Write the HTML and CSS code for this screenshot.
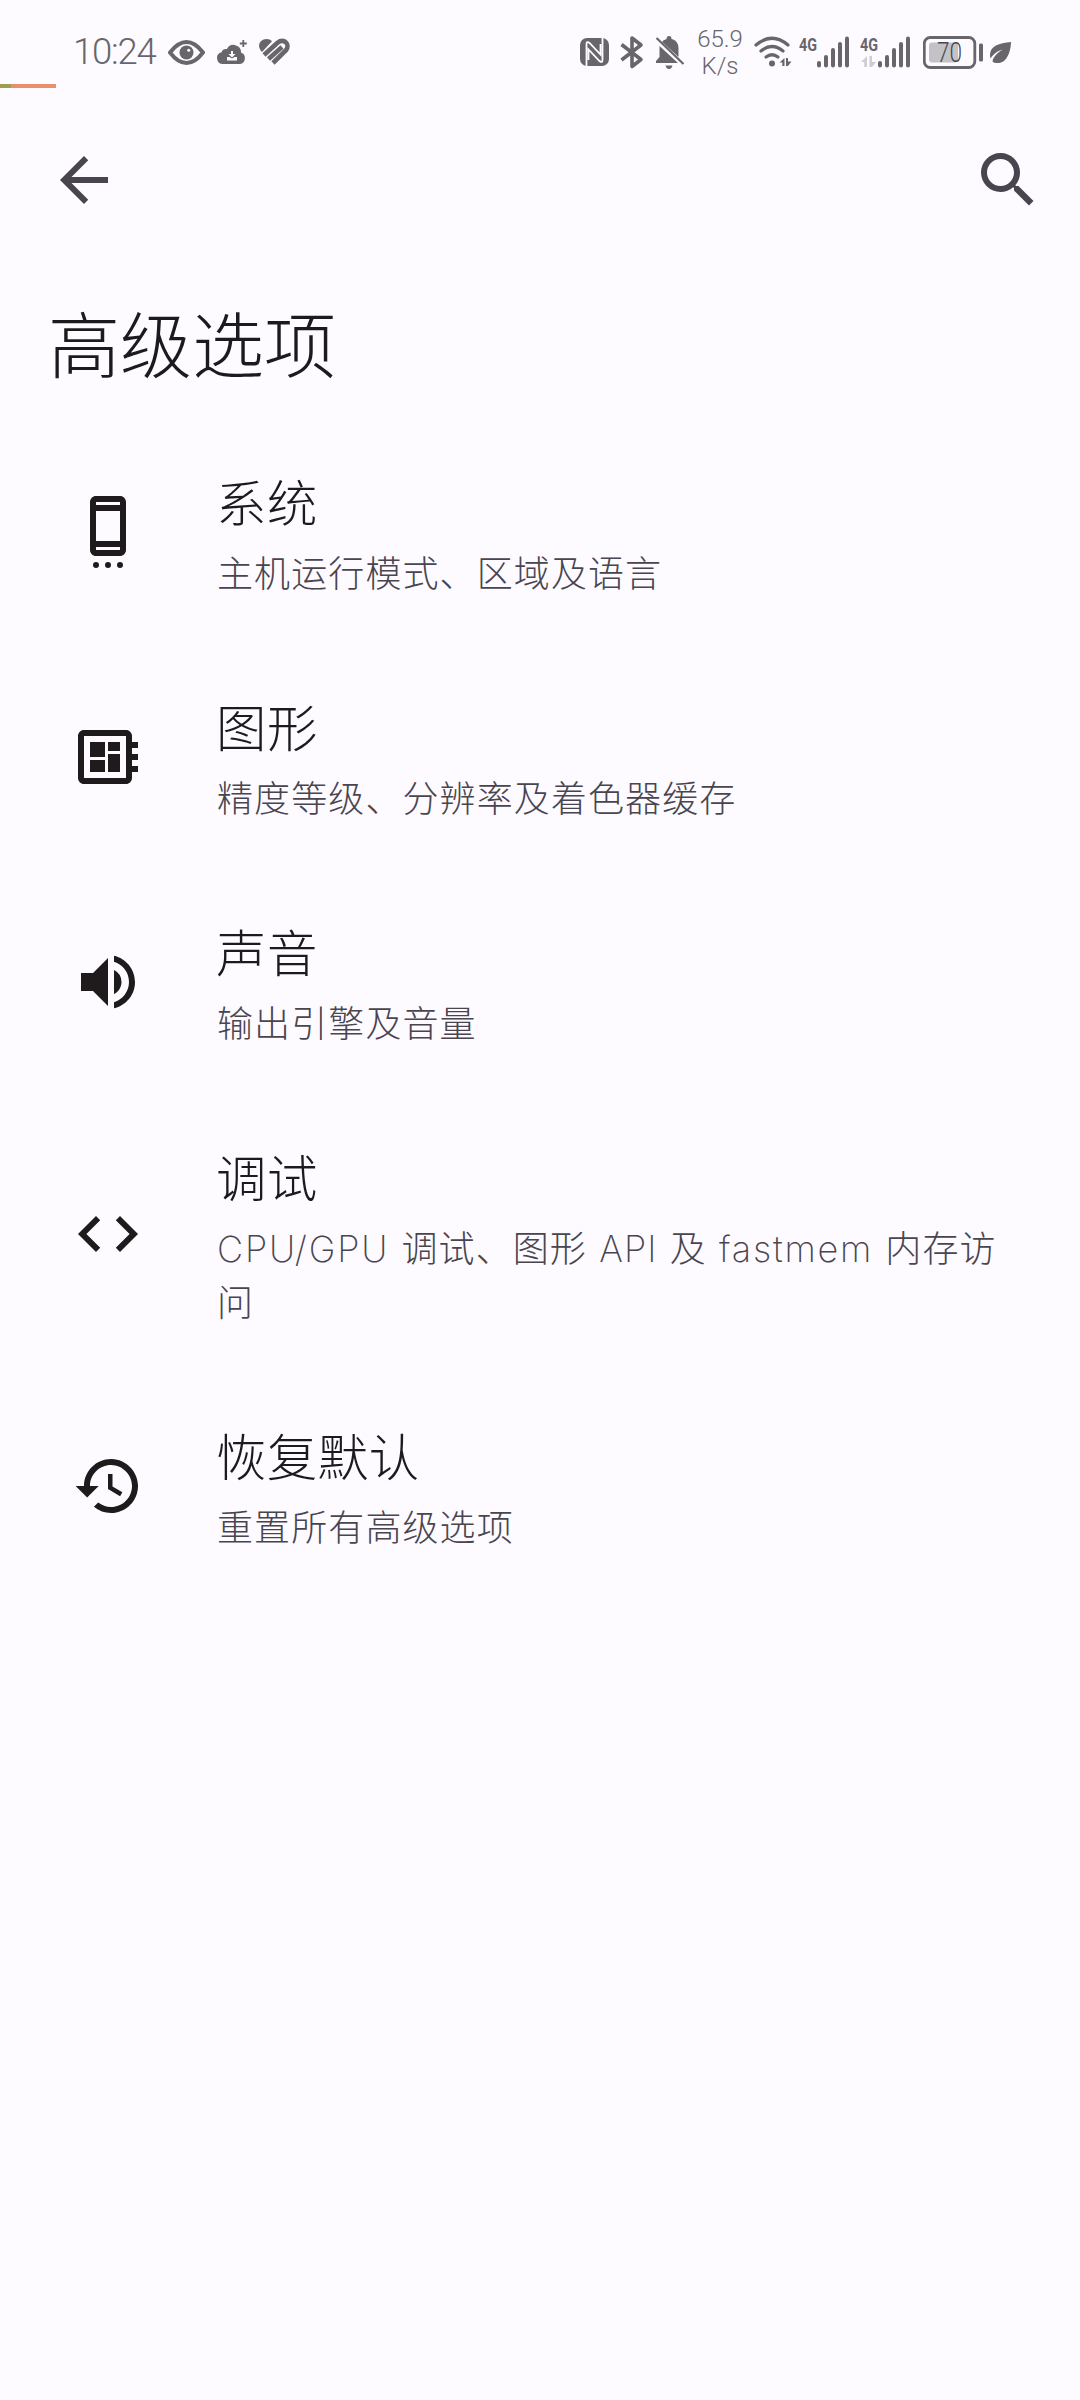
FILE: index.html
```html
<!DOCTYPE html>
<html lang="zh-CN">
<head>
<meta charset="utf-8">
<title>高级选项</title>
<link rel="stylesheet" href="styles.css">
</head>
<body>
<header class="status">
  <span class="clock">10:24</span>
  <svg class="eye" width="38" height="40" viewBox="168 32 38 40"><path d="M170 52.500Q178 42 186.500 42T203 52.500Q195 63 186.500 63T170 52.500Z" fill="none" stroke="#68666b" stroke-width="4" stroke-linejoin="round"/><circle cx="186.500" cy="52.500" r="7"/><circle cx="188.700" cy="50.200" r="1.500" fill="#fdfbff"/></svg>
  <svg class="cloud" width="31" height="40" viewBox="217 32 31 40"><path d="M223 64a6 6 0 0 1-1.500-11.800A5 5 0 0 1 227 49a7.400 7.400 0 0 1 14 3.500A6 6 0 0 1 240 64Z"/><path d="M243.300 40v7M239.800 43.500h7" stroke="#68666b" stroke-width="1.800"/><path d="M231 51h2v3h2.500l-3.500 3.500-3.500-3.500h2.500zM227 57h2.500l2.500 1.500 2.500-1.500h2.500v3.500h-10z" fill="#fdfbff"/></svg>
  <svg class="heart" width="32" height="40" viewBox="259 32 32 40"><path d="M262 52C256 46 260 39 266.500 39c2.500 0 4 .8 5.500 2.300z"/><path d="M264 55L277.500 42.800C284 37.500 290.500 44.500 286 50.200L273 63" fill="none" stroke="#68666b" stroke-width="4.600"/><path d="M268.500 59L282 47" stroke="#68666b" stroke-width="4.600"/></svg>
  <span class="grow"></span>
  <svg class="nfc" width="29" height="40" viewBox="580 32 29 40"><rect x="580" y="38" width="29" height="28" rx="7"/><path d="M586.500 66V44.500Q586.500 40.500 589.500 43L600.500 54.500V44M602.500 38V59.500Q602.500 63.500 599.500 61L588.500 49.500V60" fill="none" stroke="#fdfbff" stroke-width="1.800"/></svg>
  <svg class="bt" width="24" height="40" viewBox="620 32 24 40"><path d="M621.500 44.500L641 59.500L632 66.500V38L641 45L621.500 60" fill="none" stroke="#68666b" stroke-width="3.600" stroke-linejoin="round"/></svg>
  <svg class="bell" width="30" height="40" viewBox="655 32 30 40"><path d="M662 42q1-2 4.500-3 0-3 2.500-3t2.500 3c5 1 7 5 7 9v9L662.500 42.300zM659.500 46L678 63h-22v-2l3.500-4zM665.500 65.500h7q-1 3.500-3.500 3.500t-3.500-3.500z"/><path d="M656.500 38L683.500 64" stroke="#68666b" stroke-width="2.200"/></svg>
  <span class="speed"><span>65.9</span><span>K/s</span></span>
  <svg class="wifi" width="38" height="40" viewBox="754 32 38 40"><g fill="none" stroke="#68666b" stroke-width="3.200" stroke-linecap="round"><path d="M756 45Q772 31.500 788 45"/><path d="M761 51Q772 42 783 51"/><path d="M766 57Q772 52.500 778 57"/></g><circle cx="772" cy="63.500" r="3"/><path d="M779.500 62.500l5-4.500v8h-2.200v-3.500zM786 58h2v3.500h3.500l-3.500 4.500h-2z"/></svg>
  <svg class="sim" width="51" height="40" viewBox="799 32 51 40"><g class="net"><text x="799" y="51" textLength="18" lengthAdjust="spacingAndGlyphs">4G</text></g><rect x="817" y="61" width="4" height="6.500" rx="2"/><rect x="824" y="55" width="4" height="12.500" rx="2"/><rect x="831" y="48" width="4" height="19.500" rx="2"/><rect x="838" y="42" width="4" height="25.500" rx="2"/><rect x="845" y="36.500" width="4" height="31" rx="2"/></svg>
  <svg class="sim2" width="51" height="40" viewBox="860 32 51 40"><g class="net"><text x="860" y="51" textLength="18" lengthAdjust="spacingAndGlyphs">4G</text></g><path d="M861 62l6-6v11h-2.800v-5zM869.500 56h2.500v6h4l-4 5h-2.500z" fill="#cfcdd2"/><rect x="878" y="61" width="4" height="6.500" rx="2"/><rect x="885" y="55" width="4" height="12.500" rx="2"/><rect x="892" y="48" width="4" height="19.500" rx="2"/><rect x="899" y="42" width="4" height="25.500" rx="2"/><rect x="906" y="36.500" width="4" height="31" rx="2"/></svg>
  <svg class="battery" width="61" height="40" viewBox="923 32 61 40"><rect x="924.300" y="37.500" width="50.500" height="30" rx="6" fill="none" stroke="#68666b" stroke-width="2.800"/><rect x="929" y="42.500" width="29" height="20" rx="3" fill="#c4c2c6"/><rect x="979" y="43.500" width="4" height="18" rx="1.500"/><text class="pct" x="937" y="62" textLength="25" lengthAdjust="spacingAndGlyphs">70</text></svg>
  <svg class="leaf" width="22" height="40" viewBox="990 32 22 40"><path d="M1011 42C999 43 990 46 990 55q0 2 .5 3.500C994 53 999 50.500 1003 49.500 998 52 993 57 992.500 61.500c2 2 8 2.500 12-1S1011 49 1011 42Z"/></svg>
</header>
<div class="progress"></div>
<nav class="toolbar">
  <svg width="72" height="72" viewBox="0 0 24 24"><path d="M20 11H7.830l5.590-5.590L12 4l-8 8 8 8 1.410-1.410L7.830 13H20z"/></svg>
  <svg width="72" height="72" viewBox="0 0 24 24"><path d="M15.500 14h-.79l-.28-.27A6.471 6.471 0 0 0 16 9.500 6.500 6.500 0 1 0 9.500 16c1.610 0 3.090-.59 4.230-1.570l.27.28v.79l5 4.990L20.490 19zm-6 0C7.010 14 5 11.990 5 9.500S7.010 5 9.500 5 14 7.010 14 9.500 11.990 14 9.500 14z"/></svg>
</nav>
<h1>高级选项</h1>
<main>
  <section class="item">
    <svg width="72" height="72" viewBox="0 0 24 24"><path d="M16 0H8C6.900 0 6 .9 6 2v16c0 1.100.9 2 2 2h8c1.100 0 2-.9 2-2V2c0-1.100-.9-2-2-2zm0 18H8v-1h8zm0-3H8V5h8zm0-12H8V2h8z"/><circle cx="8" cy="23" r="1"/><circle cx="12" cy="23" r="1"/><circle cx="16" cy="23" r="1"/></svg>
    <div><h2>系统</h2><p>主机运行模式、区域及语言</p></div>
  </section>
  <section class="item">
    <svg width="72" height="72" viewBox="0 0 24 24"><path d="M22 9V7h-2V5c0-1.100-.9-2-2-2H4c-1.100 0-2 .9-2 2v14c0 1.100.9 2 2 2h14c1.100 0 2-.9 2-2v-2h2v-2h-2v-2h2v-2h-2V9zm-4 10H4V5h14zM6 13h5v4H6zm6-6h4v3h-4zM6 7h5v5H6zm6 4h4v6h-4z"/></svg>
    <div><h2>图形</h2><p>精度等级、分辨率及着色器缓存</p></div>
  </section>
  <section class="item">
    <svg width="72" height="72" viewBox="0 0 24 24"><path d="M3 9v6h4l5 5V4L7 9zm13.500 3A4.500 4.500 0 0 0 14 7.970v8.050c1.480-.73 2.500-2.250 2.500-4.020zM14 3.230v2.060c2.890.86 5 3.540 5 6.710s-2.110 5.850-5 6.710v2.060c4.010-.91 7-4.490 7-8.770s-2.990-7.860-7-8.770z"/></svg>
    <div><h2>声音</h2><p>输出引擎及音量</p></div>
  </section>
  <section class="item">
    <svg width="72" height="72" viewBox="0 0 24 24"><path d="M9.400 16.600L4.800 12l4.600-4.600L8 6l-6 6 6 6zm5.200 0l4.600-4.600-4.600-4.600L16 6l6 6-6 6z"/></svg>
    <div><h2>调试</h2><p><span class="wide">CPU/GPU</span> 调试、图形 API 及 <span class="wide">fastmem</span> 内存访问</p></div>
  </section>
  <section class="item">
    <svg width="72" height="72" viewBox="0 0 24 24"><path d="M13.260 3C8.170 2.860 4 6.950 4 12H1.200l3.850 3.850L8.900 12H6c0-3.900 3.180-7.050 7.100-7 3.720.05 6.850 3.180 6.900 6.900.05 3.910-3.100 7.100-7 7.100-1.610 0-3.100-.55-4.280-1.480L7.300 18.940A8.960 8.960 0 0 0 13 21c5.050 0 9.140-4.170 9-9.260C21.870 7.050 17.950 3.130 13.260 3zM12 8v5l4.020 2.380.77-1.280-3.290-1.950V8z"/></svg>
    <div><h2>恢复默认</h2><p>重置所有高级选项</p></div>
  </section>
</main>
</body>
</html>
```
FILE: styles.css
```css
* { box-sizing: border-box; margin: 0; padding: 0; }
body {
  width: 1080px;
  min-height: 2400px;
  background: #fdfbff;
  color: #1c1a1d;
  font-family: Inter, "Noto Sans CJK SC", sans-serif;
  font-weight: 300;
}
svg { display: block; flex: none; }
.status {
  display: flex;
  align-items: center;
  height: 84px;
  padding: 20px 68px 0 73px;
  color: #68666b;
  fill: #68666b;
  font-family: Roboto, sans-serif;
}
.clock { width: 95px; font-size: 36.5px; line-height: 42px; letter-spacing: -1.2px; }
.cloud { margin-left: 11px; }
.heart { margin-left: 11px; }
.grow { flex: 1; }
.bt { margin-left: 11px; }
.bell { margin-left: 11px; }
.speed {
  display: flex;
  flex-direction: column;
  width: 69px;
  padding: 1px 0 0 1px;
  text-align: center;
  font-size: 24px;
  line-height: 27px;
}
.sim { margin-left: 7px; }
.sim2 { margin-left: 10px; }
.battery { margin-left: 12px; }
.leaf { margin-left: 6px; }
.net { font-size: 19px; font-weight: 700; }
.pct { font-size: 27px; font-weight: 300; fill: #4a484c; }
.progress {
  width: 56px;
  height: 4px;
  background: linear-gradient(90deg, #9fa04f 11px, #ea8f6c 11px);
}
.toolbar {
  display: flex;
  justify-content: space-between;
  height: 184px;
  padding: 56px 36px 0 48px;
  fill: #49454f;
}
h1 {
  height: 147.5px;
  padding-left: 48px;
  font-size: 72px;
  line-height: 147px;
  font-weight: 300;
}
.item {
  display: flex;
  align-items: center;
  padding: 43.5px 72px;
  fill: #1f1a1b;
}
.item div { margin-left: 72px; padding-top: 1.5px; }
h2 {
  margin-bottom: 4.5px;
  font-size: 50.4px;
  line-height: 78px;
  letter-spacing: 0.5px;
  font-weight: 300;
}
p {
  padding-left: 1px;
  color: #49454f;
  font-size: 36px;
  font-weight: 200;
  line-height: 54px;
  letter-spacing: 1.1px;
  word-spacing: 1px;
}
.wide { letter-spacing: 1.8px; }
```
